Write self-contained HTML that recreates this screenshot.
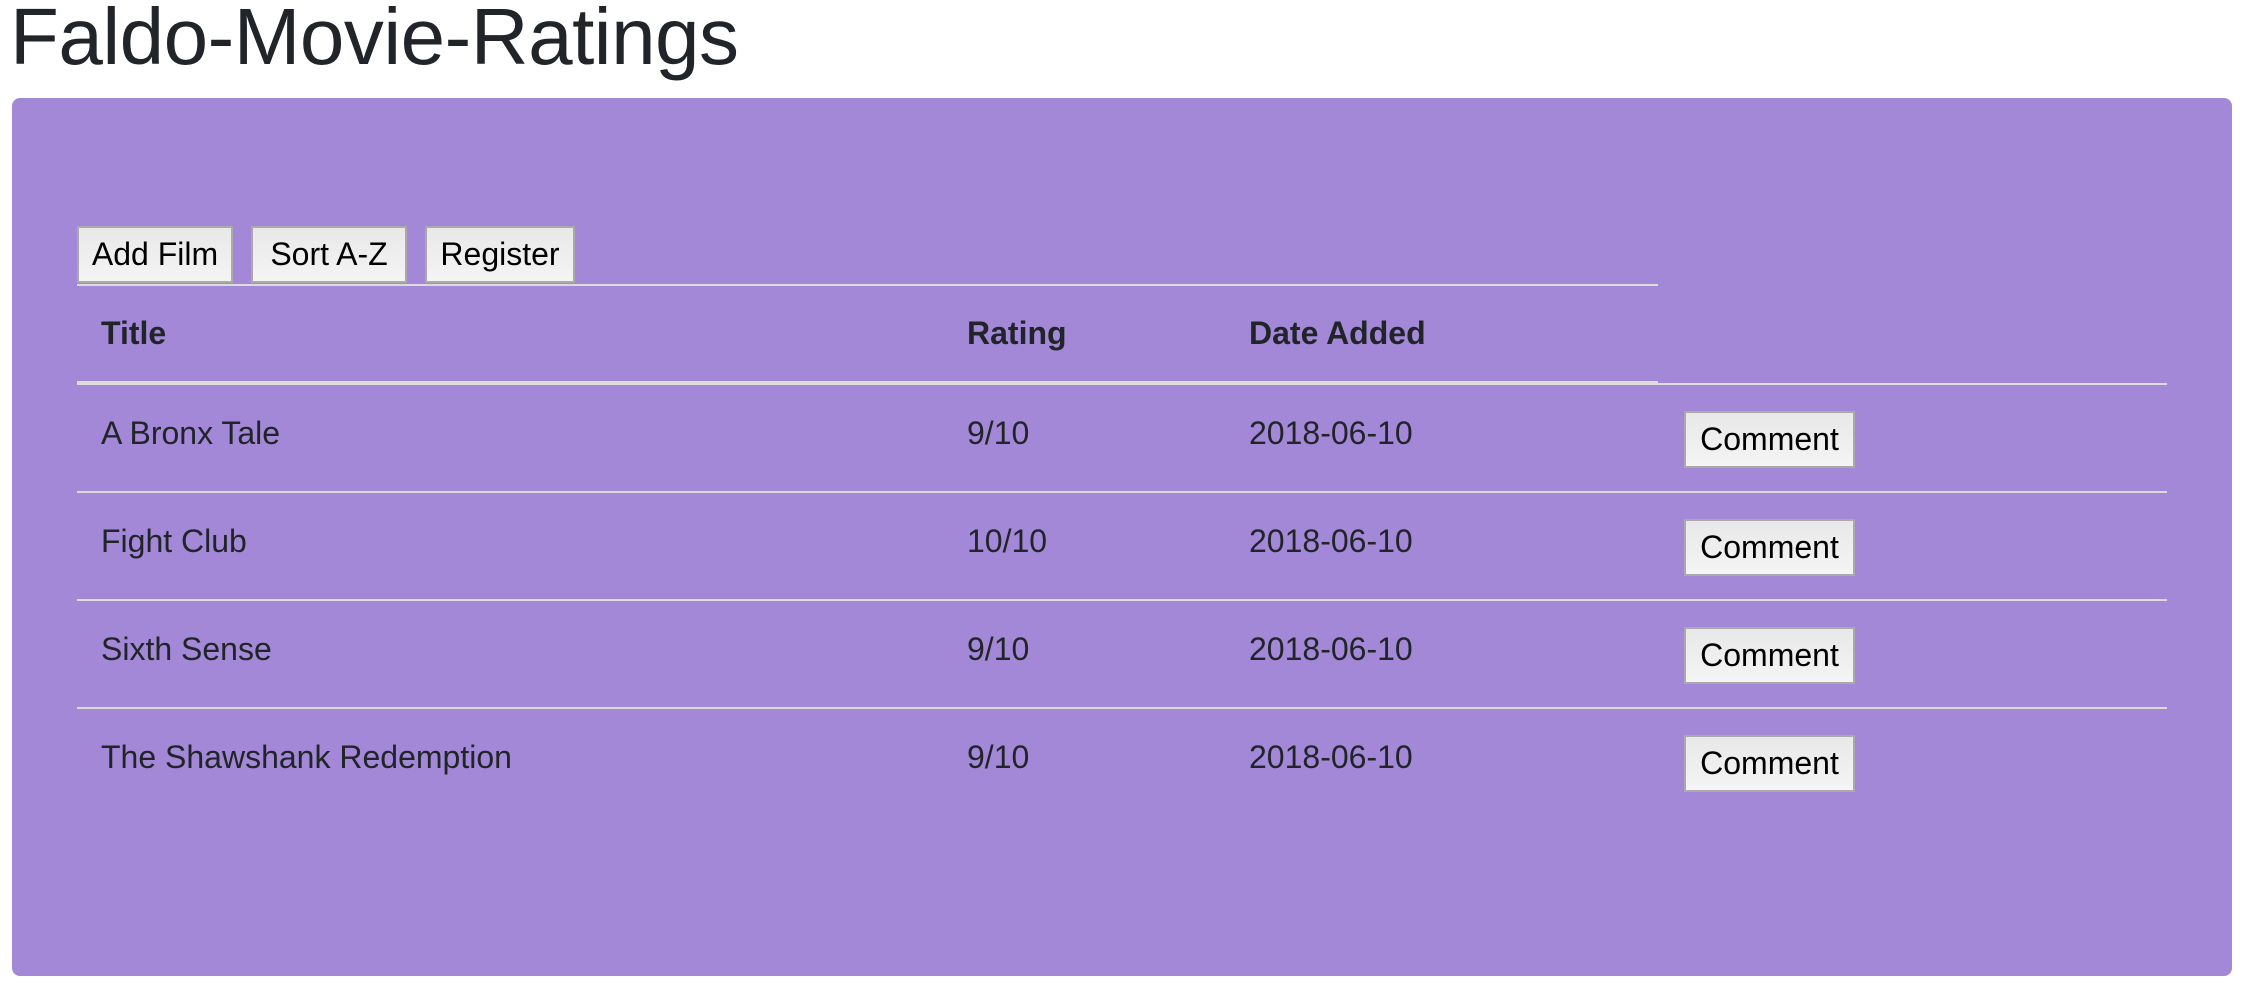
<!DOCTYPE html>
<html><head><meta charset="utf-8"><style>
*{margin:0;padding:0;box-sizing:border-box}
body{width:2256px;height:984px;background:#fff;position:relative;overflow:hidden;font-family:"Liberation Sans",Arial,sans-serif;color:#212529}
.abs{position:absolute}
h1{position:absolute;left:10px;top:-3px;font-size:80px;font-weight:400;line-height:80px;letter-spacing:-0.5px;color:#212529}
.box{left:12px;top:98px;width:2220px;height:878px;background:#a288d6;border-radius:8px}
.btn{position:absolute;height:57px;background:linear-gradient(#e8e8e8,#f4f4f4);border:2px solid #aaa;font-size:32px;color:#000;line-height:53px;text-align:center}
.line{position:absolute;height:2px;background:#dcdcdc}
.t{position:absolute;font-size:32px;line-height:40px;white-space:nowrap}
.b{font-weight:700}
</style></head><body>
<h1>Faldo-Movie-Ratings</h1>
<div class="abs box"></div>
<div class="btn" style="left:77px;top:226px;width:156px">Add Film</div>
<div class="btn" style="left:251px;top:226px;width:156px">Sort A-Z</div>
<div class="btn" style="left:425px;top:226px;width:150px">Register</div>
<div class="line" style="left:77px;top:284px;width:1581px"></div>
<div class="t b" style="left:101px;top:313px">Title</div>
<div class="t b" style="left:967px;top:313px">Rating</div>
<div class="t b" style="left:1249px;top:313px">Date Added</div>
<div class="line" style="left:77px;top:381px;width:1581px;height:3px"></div>
<div class="line" style="left:77px;top:383px;width:2090px"></div>

<div class="t" style="left:101px;top:413px">A Bronx Tale</div>
<div class="t" style="left:967px;top:413px">9/10</div>
<div class="t" style="left:1249px;top:413px">2018-06-10</div>
<div class="btn" style="left:1684px;top:411px;width:171px">Comment</div>
<div class="line" style="left:77px;top:491px;width:2090px"></div>

<div class="t" style="left:101px;top:521px">Fight Club</div>
<div class="t" style="left:967px;top:521px">10/10</div>
<div class="t" style="left:1249px;top:521px">2018-06-10</div>
<div class="btn" style="left:1684px;top:519px;width:171px">Comment</div>
<div class="line" style="left:77px;top:599px;width:2090px"></div>

<div class="t" style="left:101px;top:629px">Sixth Sense</div>
<div class="t" style="left:967px;top:629px">9/10</div>
<div class="t" style="left:1249px;top:629px">2018-06-10</div>
<div class="btn" style="left:1684px;top:627px;width:171px">Comment</div>
<div class="line" style="left:77px;top:707px;width:2090px"></div>

<div class="t" style="left:101px;top:737px">The Shawshank Redemption</div>
<div class="t" style="left:967px;top:737px">9/10</div>
<div class="t" style="left:1249px;top:737px">2018-06-10</div>
<div class="btn" style="left:1684px;top:735px;width:171px">Comment</div>
</body></html>
